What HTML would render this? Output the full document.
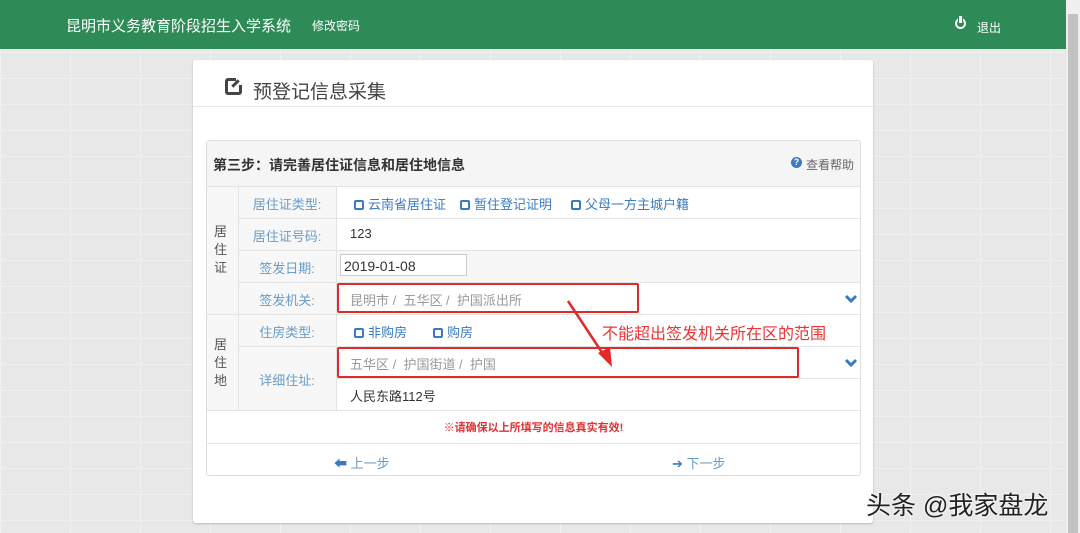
<!DOCTYPE html>
<html><head><meta charset="utf-8"><style>
*{margin:0;padding:0;box-sizing:border-box}
body{width:1080px;height:533px;overflow:hidden;position:relative;font-family:"Liberation Sans","Noto Sans CJK SC",sans-serif;background-color:#e8e8e8;background-image:linear-gradient(#efefef 1px,transparent 1px),linear-gradient(90deg,#f1f1f1 1px,transparent 1px);background-size:70px 26px}
.a{position:absolute}
.hdr{left:0;top:0;width:1066px;height:49px;background:#2e8b57;color:#fff}
.sb{left:1066px;top:0;width:14px;height:533px;background:#f0f0f0}
.sb i{position:absolute;left:2px;top:14px;width:10px;height:519px;background:#c2c2c2}
.card{left:193px;top:60px;width:680px;height:463px;background:#fff;border-radius:3px;box-shadow:0 1px 2px rgba(0,0,0,.2)}
.line{background:#e8e8e8;height:1px}
.lab{color:#6a9cc6;font-size:13px;text-align:center}
.v{font-size:13px;color:#333}
.rowb{left:206px;width:655px;height:1px;background:#e3e3e3}
.chk{display:inline-block;width:10px;height:10px;border:2px solid #3a7bbf;border-radius:2px;margin-right:4px;vertical-align:-1px}
.opt{color:#3a7bbf;font-size:13px}
.red{border:2px solid #e12a2a;border-radius:2px}
</style></head><body>
<div class="a hdr">
 <div class="a" style="left:66px;top:15px;font-size:15px">昆明市义务教育阶段招生入学系统</div>
 <div class="a" style="left:312px;top:17px;font-size:12px">修改密码</div>
 <div class="a" style="left:955px;top:18px;width:11px;height:11px;border:2px solid #fff;border-radius:50%"></div>
 <div class="a" style="left:958px;top:16px;width:5px;height:7px;background:#fff;border-left:1px solid #2e8b57;border-right:1px solid #2e8b57"></div>
 <div class="a" style="left:977px;top:19px;font-size:12px">退出</div>
</div>
<div class="a sb"><i></i></div>
<div class="a card"></div>
<div class="a" style="left:225px;top:78px;width:17px;height:17px;border:3px solid #444;border-radius:3px"></div>
<div class="a" style="left:236px;top:75px;width:10px;height:10px;background:#fff"></div>
<div class="a" style="left:234px;top:79px;width:3px;height:9px;background:#444;transform:rotate(45deg)"></div>
<div class="a" style="left:253px;top:77px;font-size:19px;color:#444">预登记信息采集</div>
<div class="a line" style="left:193px;top:106px;width:680px"></div>
<div class="a" style="left:206px;top:140px;width:655px;height:336px;border:1px solid #ddd;border-radius:3px;background:#fff"></div>
<div class="a" style="left:207px;top:141px;width:653px;height:45px;background:#f5f5f5"></div>
<div class="a" style="left:213px;top:155px;font-size:14px;font-weight:bold;color:#333">第三步：请完善居住证信息和居住地信息</div>
<div class="a" style="left:791px;top:157px;width:11px;height:11px;border-radius:50%;background:#3a7bbf;color:#fff;font-size:9px;text-align:center;line-height:11px;font-weight:bold">?</div>
<div class="a" style="left:806px;top:156px;font-size:12px;color:#666">查看帮助</div>
<div class="a" style="left:207px;top:187px;width:129px;height:223px;background:#f7f7f7"></div>
<div class="a" style="left:207px;top:251px;width:653px;height:31px;background:#f7f7f7"></div>
<div class="a" style="left:238px;top:186px;width:1px;height:224px;background:#e3e3e3"></div>
<div class="a" style="left:336px;top:186px;width:1px;height:224px;background:#e3e3e3"></div>
<div class="a rowb" style="top:186px"></div>
<div class="a rowb" style="top:218px;left:238px;width:623px"></div>
<div class="a rowb" style="top:250px;left:238px;width:623px"></div>
<div class="a rowb" style="top:282px;left:238px;width:623px"></div>
<div class="a rowb" style="top:314px"></div>
<div class="a rowb" style="top:346px;left:238px;width:623px"></div>
<div class="a rowb" style="top:378px;left:336px;width:525px"></div>
<div class="a rowb" style="top:410px"></div>
<div class="a rowb" style="top:443px"></div>
<div class="a" style="left:214px;top:223px;font-size:13px;color:#555;line-height:18px;width:16px">居<br>住<br>证</div>
<div class="a" style="left:214px;top:336px;font-size:13px;color:#555;line-height:18px;width:16px">居<br>住<br>地</div>
<div class="a lab" style="left:238px;top:194px;width:98px">居住证类型:</div>
<div class="a lab" style="left:238px;top:226px;width:98px">居住证号码:</div>
<div class="a lab" style="left:238px;top:258px;width:98px">签发日期:</div>
<div class="a lab" style="left:238px;top:290px;width:98px">签发机关:</div>
<div class="a lab" style="left:238px;top:322px;width:98px">住房类型:</div>
<div class="a lab" style="left:238px;top:370px;width:98px">详细住址:</div>
<div class="a opt" style="left:354px;top:194px"><span class="chk"></span>云南省居住证</div>
<div class="a opt" style="left:460px;top:194px"><span class="chk"></span>暂住登记证明</div>
<div class="a opt" style="left:571px;top:194px"><span class="chk"></span>父母一方主城户籍</div>
<div class="a v" style="left:350px;top:226px">123</div>
<div class="a" style="left:340px;top:254px;width:127px;height:22px;border:1px solid #ccc;background:#fff"></div>
<div class="a v" style="left:344px;top:258px;font-size:14px">2019-01-08</div>
<div class="a" style="left:350px;top:290px;font-size:13px;color:#999">昆明市 /&nbsp; 五华区 /&nbsp; 护国派出所</div>
<div class="a red" style="left:337px;top:283px;width:302px;height:30px"></div>
<svg class="a" style="left:844px;top:294px" width="14" height="10"><path d="M2 2 L7 7 L12 2" stroke="#3a7bbf" stroke-width="3" fill="none"/></svg>
<div class="a opt" style="left:354px;top:322px"><span class="chk"></span>非购房</div>
<div class="a opt" style="left:433px;top:322px"><span class="chk"></span>购房</div>
<div class="a" style="left:350px;top:354px;font-size:13px;color:#999">五华区 /&nbsp; 护国街道 /&nbsp; 护国</div>
<div class="a red" style="left:337px;top:347px;width:462px;height:31px"></div>
<svg class="a" style="left:844px;top:358px" width="14" height="10"><path d="M2 2 L7 7 L12 2" stroke="#3a7bbf" stroke-width="3" fill="none"/></svg>
<div class="a v" style="left:350px;top:386px">人民东路112号</div>
<div class="a" style="left:602px;top:320px;font-size:16px;color:#e33">不能超出签发机关所在区的范围</div>
<svg class="a" style="left:560px;top:295px" width="60" height="75"><line x1="8" y1="6" x2="45" y2="62" stroke="#e12a2a" stroke-width="2.5"/><polygon points="38,58 52,72 50,52" fill="#e12a2a"/></svg>
<div class="a" style="left:206px;top:419px;width:655px;text-align:center;font-size:11px;font-weight:bold;color:#d33">※请确保以上所填写的信息真实有效!</div>
<div class="a" style="left:334px;top:453px;font-size:13px;color:#3a7bbf">&#x2B05; <span style="color:#6a9cc6">上一步</span></div>
<div class="a" style="left:672px;top:453px;font-size:13px;color:#3a7bbf">&#x2794; <span style="color:#6a9cc6">下一步</span></div>
<div class="a" style="left:866px;top:486px;font-size:25px;color:#222;text-shadow:0 0 2px #fff,0 0 2px #fff">头条 @我家盘龙</div>
</body></html>
